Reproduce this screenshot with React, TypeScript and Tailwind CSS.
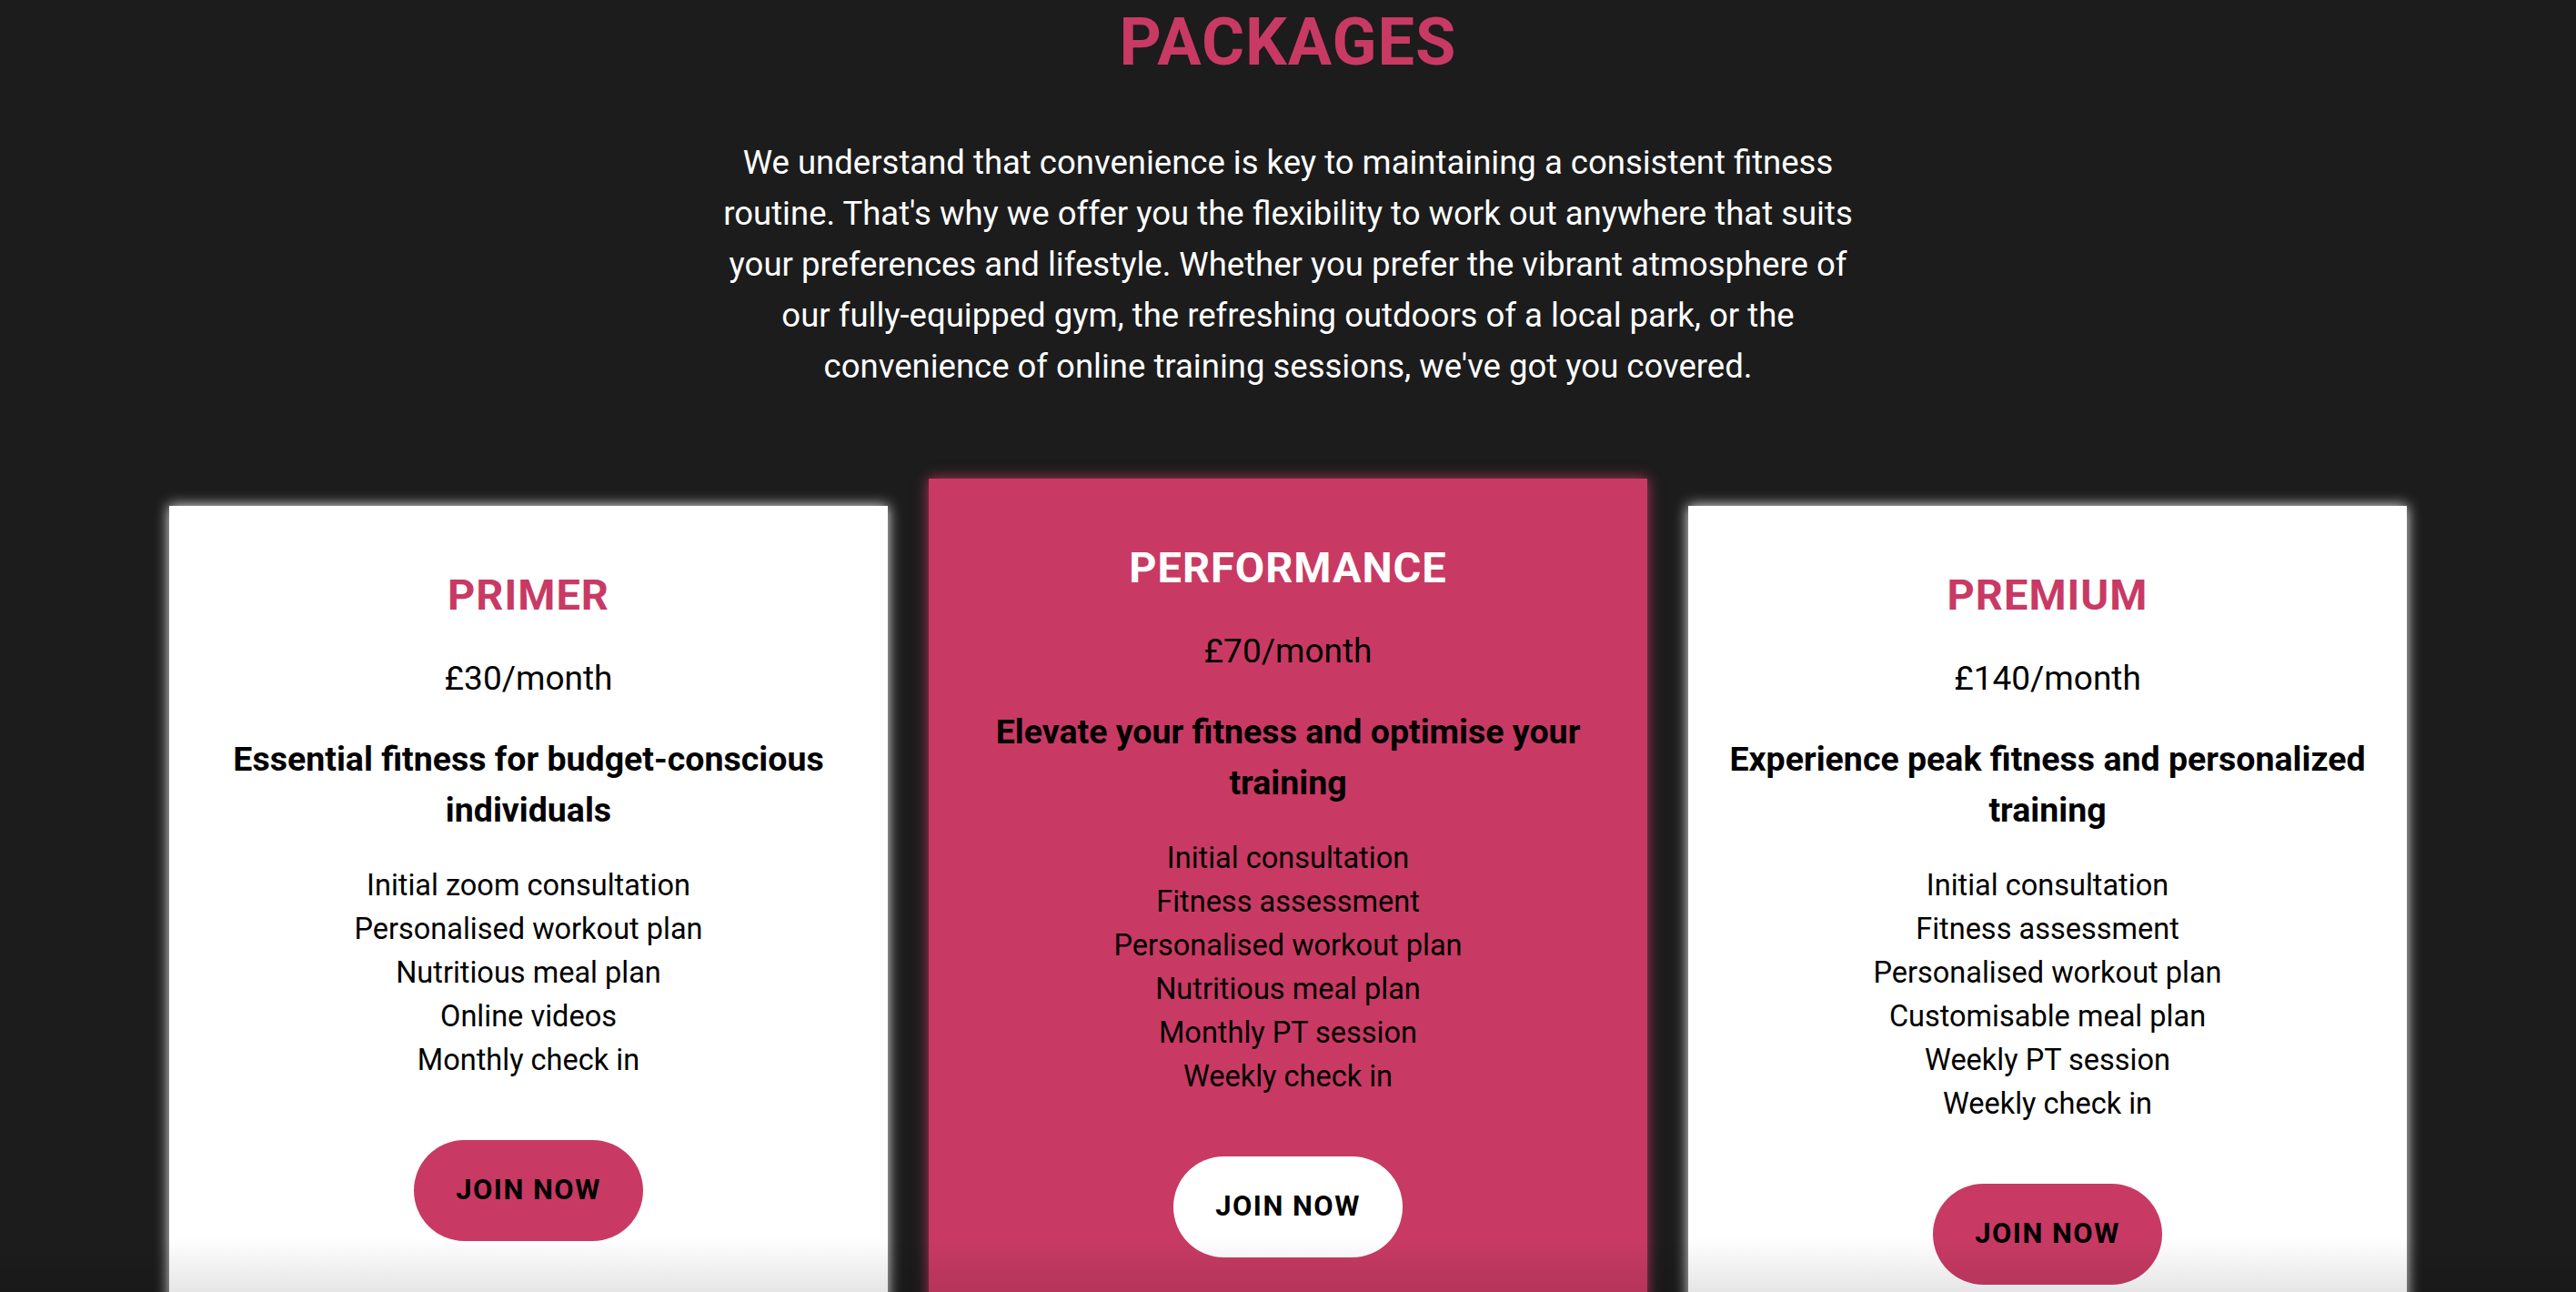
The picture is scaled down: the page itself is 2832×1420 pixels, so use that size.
import React from 'react';

type Plan = {
  name: string;
  price: string;
  tagline: string;
  features: string[];
  featured?: boolean;
};

const plans: Plan[] = [
  {
    name: 'PRIMER',
    price: '£30/month',
    tagline: 'Essential fitness for budget-conscious individuals',
    features: [
      'Initial zoom consultation',
      'Personalised workout plan',
      'Nutritious meal plan',
      'Online videos',
      'Monthly check in',
    ],
  },
  {
    name: 'PERFORMANCE',
    price: '£70/month',
    tagline: 'Elevate your fitness and optimise your training',
    features: [
      'Initial consultation',
      'Fitness assessment',
      'Personalised workout plan',
      'Nutritious meal plan',
      'Monthly PT session',
      'Weekly check in',
    ],
    featured: true,
  },
  {
    name: 'PREMIUM',
    price: '£140/month',
    tagline: 'Experience peak fitness and personalized training',
    features: [
      'Initial consultation',
      'Fitness assessment',
      'Personalised workout plan',
      'Customisable meal plan',
      'Weekly PT session',
      'Weekly check in',
    ],
  },
];

function PlanCard({ plan }: { plan: Plan }) {
  const featured = plan.featured;
  return (
    <div
      className={
        featured
          ? 'relative -mt-[30px] bg-[#c83a64] px-[34px] pt-[70px] pb-[120px] text-center shadow-[0_0_14px_rgba(200,58,100,0.9)]'
          : 'relative bg-white px-[34px] pt-[70px] pb-[120px] text-center shadow-[0_0_14px_rgba(255,255,255,0.95)]'
      }
    >
      <h3
        className={
          featured
            ? 'text-[47px] leading-[56px] font-bold tracking-[1px] text-white'
            : 'text-[47px] leading-[56px] font-bold tracking-[1px] text-[#c83a64]'
        }
      >
        {plan.name}
      </h3>
      <p className="mt-[40px] text-[37px] leading-[48px] text-black">{plan.price}</p>
      <p className="mt-[36px] text-[37.5px] leading-[56px] font-bold text-black">{plan.tagline}</p>
      <ul className="mt-[31px]">
        {plan.features.map((f) => (
          <li key={f} className="text-[32.5px] leading-[48px] text-black">
            {f}
          </li>
        ))}
      </ul>
      <button
        className={
          featured
            ? 'mt-[64px] h-[111px] w-[252px] rounded-full bg-white text-[31px] font-bold tracking-[1.5px] text-black'
            : 'mt-[64px] h-[111px] w-[252px] rounded-full bg-[#c83a64] text-[31px] font-bold tracking-[1.5px] text-black'
        }
      >
        JOIN NOW
      </button>
    </div>
  );
}

export default function App() {
  return (
    <div
      className="relative h-[1420px] overflow-hidden bg-[#1c1c1c]"
      style={{ fontFamily: 'Roboto, "Noto Sans", sans-serif' }}
    >
      <section className="pt-[7px]">
        <h1 className="text-center text-[72px] leading-[80px] font-bold tracking-[1px] text-[#c83a64]">
          PACKAGES
        </h1>
        <p className="mx-auto mt-[64px] max-w-[1500px] text-center text-[36.5px] leading-[56px] text-white">
          We understand that convenience is key to maintaining a consistent fitness
          <br />
          routine. That's why we offer you the flexibility to work out anywhere that suits
          <br />
          your preferences and lifestyle. Whether you prefer the vibrant atmosphere of
          <br />
          our fully-equipped gym, the refreshing outdoors of a local park, or the
          <br />
          convenience of online training sessions, we've got you covered.
        </p>

        {/* Plans */}
        <div className="mx-auto mt-[125px] grid max-w-[2460px] grid-cols-3 items-start gap-[45px]">
          {plans.map((p) => (
            <PlanCard key={p.name} plan={p} />
          ))}
        </div>
      </section>

      {/* soft shade along the bottom edge */}
      <div className="pointer-events-none absolute right-0 bottom-0 left-0 h-[60px] bg-gradient-to-b from-transparent to-black/10" />
    </div>
  );
}
